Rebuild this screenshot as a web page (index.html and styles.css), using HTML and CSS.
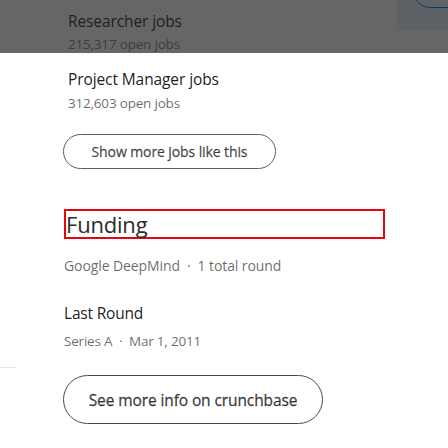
FILE: index.html
```html
<!DOCTYPE html>
<html>
<head>
<meta charset="utf-8">
<link rel="stylesheet" href="styles.css">
</head>
<body>
<div class="dim">
  <div class="job dim-job">
    <div class="job-title">Researcher jobs</div>
    <div class="job-count">215,317 open jobs</div>
  </div>
  <div class="dim-panel"><div class="dim-pill"></div></div>
</div>
<main class="content">
  <section class="job">
    <div class="job-title">Project Manager jobs</div>
    <div class="job-count">312,603 open jobs</div>
  </section>
  <button class="pill pill-small">Show more jobs like this</button>
  <h2 class="funding">Funding</h2>
  <div class="meta meta-company">Google DeepMind &nbsp;·&nbsp; 1 total round</div>
  <div class="round-title">Last Round</div>
  <div class="meta meta-round">Series A &nbsp;·&nbsp; Mar 1, 2011</div>
  <button class="pill pill-large">See more info on crunchbase</button>
  <div class="side-rule"></div>
</main>
</body>
</html>
```
FILE: styles.css
```css
html, body {
  margin: 0;
  padding: 0;
  background: #fff;
}
body {
  font-family: "Open Sans", "Noto Sans", sans-serif;
  width: 448px;
  height: 448px;
  overflow: hidden;
}
.dim {
  position: relative;
  height: 53px;
  background: #666666;
  overflow: hidden;
  padding: 11px 0 0 68px;
  box-sizing: border-box;
}
.dim-panel {
  position: absolute;
  top: 0;
  right: 0;
  width: 51px;
  height: 30px;
  background: #5f6265;
  border-bottom-left-radius: 8px;
  overflow: hidden;
}
.dim-pill {
  position: absolute;
  left: 16px;
  top: -26px;
  width: 120px;
  height: 32px;
  border: 1.5px solid #0b3a66;
  border-radius: 17px;
}
.job-title {
  font-size: 15.5px;
  line-height: 20px;
  color: rgba(0, 0, 0, 0.9);
  letter-spacing: -0.1px;
}
.job-count {
  font-size: 13.5px;
  line-height: 20px;
  margin-top: 4px;
  color: rgba(0, 0, 0, 0.6);
  letter-spacing: -0.2px;
}
.dim-job .job-title { color: #1f1f1f; }
.dim-job .job-count { color: #3d3d3d; margin-top: 3px; }
.content {
  position: relative;
  padding: 16px 0 0 63px;
  display: flex;
  flex-direction: column;
  align-items: flex-start;
}
.content .job {
  padding-left: 5px;
}
.pill {
  font-family: "Open Sans", "Noto Sans", sans-serif;
  background: #fff;
  border: 1px solid #5e5e5e;
  border-radius: 999px;
  font-weight: 400;
  -webkit-text-stroke: 0.3px currentColor;
  padding: 0;
  cursor: pointer;
}
.pill-small {
  margin-top: 21px;
  width: 213px;
  height: 35px;
  font-size: 14px;
  color: rgba(0, 0, 0, 0.68);
  letter-spacing: -0.1px;
}
.funding {
  margin: 40px 0 0 1px;
  width: 321px;
  box-sizing: border-box;
  border: 2px solid #e4050f;
  font-size: 22px;
  line-height: 26px;
  font-weight: 400;
  color: #2b2b2b;
  padding-left: 0;
  letter-spacing: -0.2px;
}
.meta {
  margin-left: 1px;
  font-size: 14px;
  line-height: 20px;
  color: rgba(0, 0, 0, 0.6);
  letter-spacing: -0.1px;
}
.meta-company {
  margin-top: 17px;
}
.round-title {
  margin: 27px 0 0 1px;
  font-size: 15.5px;
  line-height: 20px;
  color: rgba(0, 0, 0, 0.9);
  letter-spacing: -0.2px;
}
.meta-round {
  margin-top: 8px;
  font-size: 13.5px;
  letter-spacing: -0.2px;
}
.pill-large {
  margin-top: 24px;
  width: 260px;
  height: 49px;
  font-size: 15.5px;
  color: rgba(0, 0, 0, 0.75);
  border-color: #4a4a4a;
  letter-spacing: -0.1px;
}
.side-rule {
  position: absolute;
  left: 0;
  top: 314px;
  width: 16px;
  height: 1px;
  background: #e6e6e6;
}
```
